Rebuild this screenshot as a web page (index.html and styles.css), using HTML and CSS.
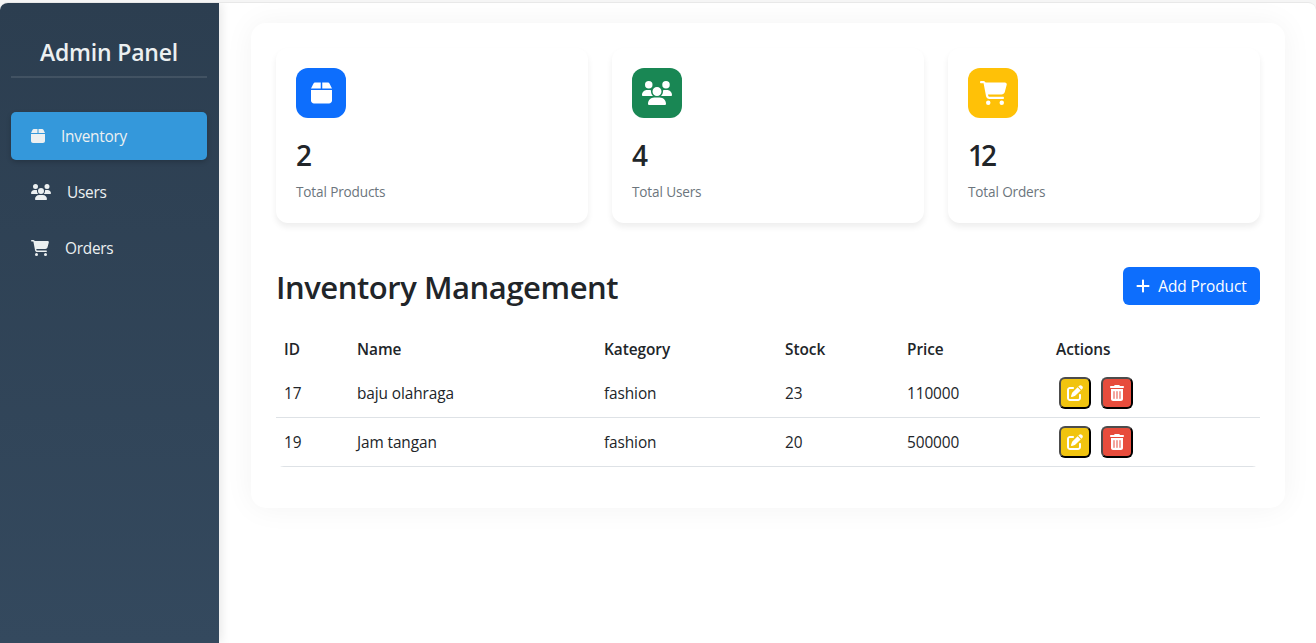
FILE: index.html
```html
<!DOCTYPE html>
<html lang="en">
<head>
<meta charset="utf-8">
<title>Admin Panel</title>
<link rel="stylesheet" href="styles.css">
</head>
<body>
<svg class="sprite" aria-hidden="true">
<symbol id="box" viewBox="0 0 448 512"><path d="M50.7 58.5L0 160H208V32H93.7C75.5 32 58.9 42.3 50.7 58.5zM240 160H448L397.3 58.5C389.1 42.3 372.5 32 354.3 32H240V160zm208 32H0V416c0 35.3 28.7 64 64 64H384c35.3 0 64-28.7 64-64V192z"/></symbol>
<symbol id="users" viewBox="0 0 640 512"><path d="M144 0a80 80 0 1 1 0 160A80 80 0 1 1 144 0zM512 0a80 80 0 1 1 0 160A80 80 0 1 1 512 0zM0 298.7C0 239.8 47.8 192 106.7 192h42.7c15.9 0 31 3.5 44.6 9.7c-1.3 7.2-1.9 14.7-1.9 22.3c0 38.2 16.8 72.5 43.3 96c-.2 0-.4 0-.7 0H21.3C9.6 320 0 310.4 0 298.7zM405.3 320c-.2 0-.4 0-.7 0c26.6-23.5 43.3-57.8 43.3-96c0-7.6-.7-15-1.9-22.3c13.6-6.3 28.7-9.7 44.6-9.7h42.7C592.2 192 640 239.8 640 298.7c0 11.8-9.6 21.3-21.3 21.3H405.3zM224 224a96 96 0 1 1 192 0 96 96 0 1 1 -192 0zM128 485.3C128 411.7 187.7 352 261.3 352H378.7C452.3 352 512 411.7 512 485.3c0 14.7-11.9 26.7-26.7 26.7H154.7c-14.7 0-26.7-11.9-26.7-26.7z"/></symbol>
<symbol id="cart" viewBox="0 0 576 512"><path d="M0 24C0 10.7 10.7 0 24 0H69.5c22 0 41.5 12.8 50.6 32h411c26.3 0 45.5 25 38.6 50.4l-41 152.3c-8.5 31.4-37 53.3-69.5 53.3H170.7l5.4 28.5c2.2 11.3 12.1 19.5 23.6 19.5H488c13.3 0 24 10.7 24 24s-10.7 24-24 24H199.7c-34.6 0-64.3-24.6-70.7-58.5L77.4 54.5c-.7-3.8-4-6.5-7.9-6.5H24C10.7 48 0 37.3 0 24zM128 464a48 48 0 1 1 96 0 48 48 0 1 1 -96 0zm336-48a48 48 0 1 1 0 96 48 48 0 1 1 0-96z"/></symbol>
<symbol id="plus" viewBox="0 0 448 512"><path d="M256 80c0-17.7-14.3-32-32-32s-32 14.3-32 32V224H48c-17.7 0-32 14.3-32 32s14.3 32 32 32H192V432c0 17.7 14.3 32 32 32s32-14.3 32-32V288H400c17.7 0 32-14.3 32-32s-14.3-32-32-32H256V80z"/></symbol>
<symbol id="edit" viewBox="0 0 512 512"><path d="M471.6 21.7c-21.9-21.9-57.3-21.9-79.2 0L362.3 51.7l97.9 97.9 30.1-30.1c21.9-21.9 21.9-57.3 0-79.2L471.6 21.7zm-299.2 220c-6.1 6.1-10.8 13.6-13.5 21.9l-29.6 88.8c-2.9 8.6-.6 18.1 5.8 24.6s15.9 8.7 24.6 5.8l88.8-29.6c8.2-2.7 15.7-7.4 21.9-13.5L437.7 172.3 339.7 74.3 172.4 241.7zM96 64C43 64 0 107 0 160V416c0 53 43 96 96 96H352c53 0 96-43 96-96V320c0-17.7-14.3-32-32-32s-32 14.3-32 32v96c0 17.7-14.3 32-32 32H96c-17.7 0-32-14.3-32-32V160c0-17.7 14.3-32 32-32h96c17.7 0 32-14.3 32-32s-14.3-32-32-32H96z"/></symbol>
<symbol id="trash" viewBox="0 0 448 512"><path d="M135.2 17.7C140.6 6.8 151.7 0 163.8 0H284.2c12.1 0 23.2 6.8 28.6 17.7L320 32h96c17.7 0 32 14.3 32 32s-14.3 32-32 32H32C14.3 96 0 81.7 0 64S14.3 32 32 32h96l7.2-14.3zM32 128H416V448c0 35.3-28.7 64-64 64H96c-35.3 0-64-28.7-64-64V128zm96 64c-8.8 0-16 7.2-16 16V432c0 8.8 7.2 16 16 16s16-7.2 16-16V208c0-8.8-7.2-16-16-16zm96 0c-8.8 0-16 7.2-16 16V432c0 8.8 7.2 16 16 16s16-7.2 16-16V208c0-8.8-7.2-16-16-16zm96 0c-8.8 0-16 7.2-16 16V432c0 8.8 7.2 16 16 16s16-7.2 16-16V208c0-8.8-7.2-16-16-16z"/></symbol>
</svg>
<div class="app">
  <aside class="sidebar">
    <h1 class="brand">Admin Panel</h1>
    <nav class="nav">
      <a class="nav-item active"><svg class="icon i-box"><use href="#box"/></svg><span>Inventory</span></a>
      <a class="nav-item"><svg class="icon i-users"><use href="#users"/></svg><span>Users</span></a>
      <a class="nav-item"><svg class="icon i-cart"><use href="#cart"/></svg><span>Orders</span></a>
    </nav>
  </aside>
  <main class="main">
    <section class="panel">
      <div class="stats">
        <div class="stat"><div class="tile blue"><svg class="icon i-box"><use href="#box"/></svg></div><div class="value">2</div><div class="label">Total Products</div></div>
        <div class="stat"><div class="tile green"><svg class="icon i-users"><use href="#users"/></svg></div><div class="value">4</div><div class="label">Total Users</div></div>
        <div class="stat"><div class="tile yellow"><svg class="icon i-cart"><use href="#cart"/></svg></div><div class="value">12</div><div class="label">Total Orders</div></div>
      </div>
      <div class="heading">
        <h2 class="title">Inventory Management</h2>
        <button class="add"><svg class="icon i-box"><use href="#plus"/></svg><span>Add Product</span></button>
      </div>
      <div class="table">
        <div class="row head"><span>ID</span><span>Name</span><span>Kategory</span><span>Stock</span><span>Price</span><span>Actions</span></div>
        <div class="row"><span>17</span><span>baju olahraga</span><span>fashion</span><span>23</span><span>110000</span><div class="actions"><button class="act edit"><svg class="icon i-sq"><use href="#edit"/></svg></button><button class="act del"><svg class="icon i-box"><use href="#trash"/></svg></button></div></div>
        <div class="row"><span>19</span><span>Jam tangan</span><span>fashion</span><span>20</span><span>500000</span><div class="actions"><button class="act edit"><svg class="icon i-sq"><use href="#edit"/></svg></button><button class="act del"><svg class="icon i-box"><use href="#trash"/></svg></button></div></div>
      </div>
    </section>
  </main>
</div>
</body>
</html>
```
FILE: styles.css
```css
* { box-sizing: border-box; }
body { margin: 0; height: 643px; padding-top: 2px; overflow: hidden; background: #f5f5f5; color: #212529; font: 15.4px/24px "Open Sans", "Noto Sans", sans-serif; }
.sprite { display: none; }
.icon { height: 1em; flex: none; fill: currentColor; font-size: 16px; }
.i-box { width: .875em; }
.i-users { width: 1.25em; }
.i-cart { width: 1.125em; }
.i-sq { width: 1em; }
.app { display: flex; height: 641px; border-top: 1px solid #e8e8e8; border-radius: 8px 8px 0 0; background: #fff; overflow: hidden; }
.sidebar { width: 219px; padding: 32px 12px 0 11px; background: linear-gradient(180deg, #2c3e50, #34495e); color: #ecf0f1; box-shadow: 2px 0 10px rgba(0,0,0,.1); }
.brand { margin: 0 0 34px; height: 43px; border-bottom: 2px solid rgba(255,255,255,.1); text-align: center; font-size: 23px; font-weight: 600; letter-spacing: -.2px; line-height: 34px; }
.nav { display: flex; flex-direction: column; gap: 8px; }
.nav-item { display: flex; align-items: center; gap: 16px; height: 48px; padding: 0 20px; border-radius: 5px; }
.nav-item span, .add span { padding-top: 2px; }
.nav-item span { letter-spacing: -.25px; }
.active { background: #3498db; box-shadow: 0 2px 5px rgba(0,0,0,.2); }
.main { flex: 1; padding: 20px 31px 0 32px; }
.panel { height: 485px; padding: 25px; border-radius: 15px; background: #fff; box-shadow: 0 0 30px rgba(0,0,0,.05); }
.stats { display: grid; grid-template-columns: repeat(3, 1fr); gap: 24px; }
.stat { height: 175px; padding: 20px; border-radius: 12px; background: #fff; box-shadow: 0 4px 6px rgba(0,0,0,.07); }
.tile { display: flex; align-items: center; justify-content: center; width: 50px; height: 50px; margin-bottom: 20px; border-radius: 12px; color: #fff; }
.tile .icon { font-size: 24px; }
.blue { background: #0d6efd; }
.green { background: #198754; }
.yellow { background: #ffc107; }
.value { height: 36px; font-size: 28px; font-weight: 600; letter-spacing: -3px; line-height: 34px; }
.label { margin-top: 7px; color: #6c757d; font-size: 13.6px; letter-spacing: -.15px; line-height: 22px; }
.heading { display: flex; justify-content: space-between; align-items: flex-start; height: 66px; margin-top: 44px; }
.title { margin: 1px 0 0; font-size: 31px; font-weight: 600; letter-spacing: -.45px; line-height: 38px; }
.add { display: flex; align-items: center; justify-content: center; gap: 8px; width: 137px; height: 38px; padding: 0; border: 0; border-radius: 6px; background: #0d6efd; color: #fff; font: inherit; letter-spacing: -.05px; white-space: nowrap; }
.table { overflow: hidden; border-radius: 8px; }
.row { display: grid; grid-template-columns: 73px 247px 181px 122px 149px 1fr; align-items: center; height: 49px; padding: 0 8px; border-bottom: 1px solid #dee2e6; letter-spacing: -.1px; }
.row span { padding-top: 2px; }
.head { height: 36px; border: 0; font-weight: 600; letter-spacing: -.05px; }
.head span { padding: 0 0 2px; }
.actions { display: flex; gap: 10px; padding-left: 3px; }
.act { display: flex; align-items: center; justify-content: center; width: 32px; height: 32px; padding: 0; border: 2px solid; border-color: #4c4c4c #000 #000 #4c4c4c; border-radius: 6px; color: #fff; }
.edit { background: #f1c40f; }
.del { background: #e74c3c; }
```
